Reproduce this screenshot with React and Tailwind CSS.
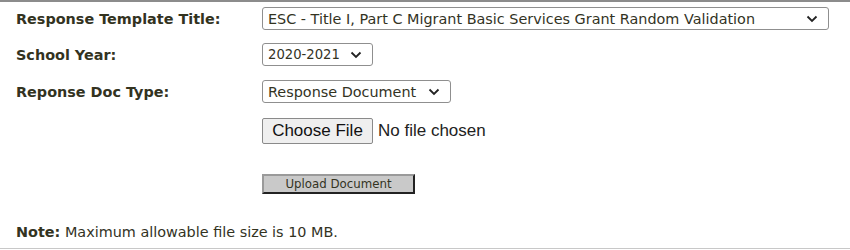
import { useState } from "react";

const Chevron = () => (
  <svg width="12" height="8" viewBox="0 0 12 8" className="shrink-0">
    <path d="M1.5 1.5 L6 6 L10.5 1.5" fill="none" stroke="#222" strokeWidth="1.8" />
  </svg>
);

function FakeSelect({ value, width, textClass = "" }) {
  return (
    <div
      className={`flex h-[23px] items-center justify-between rounded-[3px] border border-[#8f8f8f] bg-white pl-[5px] pr-[10px] ${width}`}
    >
      <span className={`whitespace-nowrap ${textClass}`}>{value}</span>
      <Chevron />
    </div>
  );
}

function Row({ label, children, className = "" }) {
  return (
    <div className={`flex items-center ${className}`}>
      <div className="w-[246px] shrink-0 font-bold">{label}</div>
      {children}
    </div>
  );
}

export default function App() {
  const [file] = useState(null);

  return (
    <div className="h-[250px] w-[850px] bg-white font-['DejaVu_Sans',Verdana,sans-serif] text-[14.4px] leading-[18px] text-[#33331f]">
      <div className="flex h-[249px] flex-col border-t-2 border-b border-t-[#8c8c8c] border-b-[#c8c8c8] pl-4 pt-[5px]">
        <Row label="Response Template Title:">
          <FakeSelect
            value="ESC - Title I, Part C Migrant Basic Services Grant Random Validation"
            width="w-[567px]"
          />
        </Row>
        <Row label="School Year:" className="mt-[13px]">
          <FakeSelect value="2020-2021" width="w-[111px]" textClass="text-[13.2px]" />
        </Row>
        <Row label="Reponse Doc Type:" className="mt-[14px]">
          <FakeSelect value="Response Document" width="w-[189px]" />
        </Row>
        <div className="ml-[246px] mt-[15px] flex items-center font-['Liberation_Sans',Arial,sans-serif] text-[17px]">
          <button className="h-[26px] w-[111px] rounded-[2px] border border-[#8a8a8a] bg-[#efefef] text-[#111]">
            Choose File
          </button>
          <span className="ml-[5px] text-[#222]">{file ? file.name : "No file chosen"}</span>
        </div>
        <div className="ml-[246px] mt-[30px]">
          <button className="h-[20px] w-[153px] border-2 border-t-[#9a9a9a] border-l-[#9a9a9a] border-r-[#222] border-b-[#222] bg-[#c9c9c9] text-[11.8px] leading-[14px] text-[#33331f]">
            Upload Document
          </button>
        </div>
        <div className="mt-[29px]">
          <span className="font-bold">Note:</span> Maximum allowable file size is 10 MB.
        </div>
      </div>
    </div>
  );
}
